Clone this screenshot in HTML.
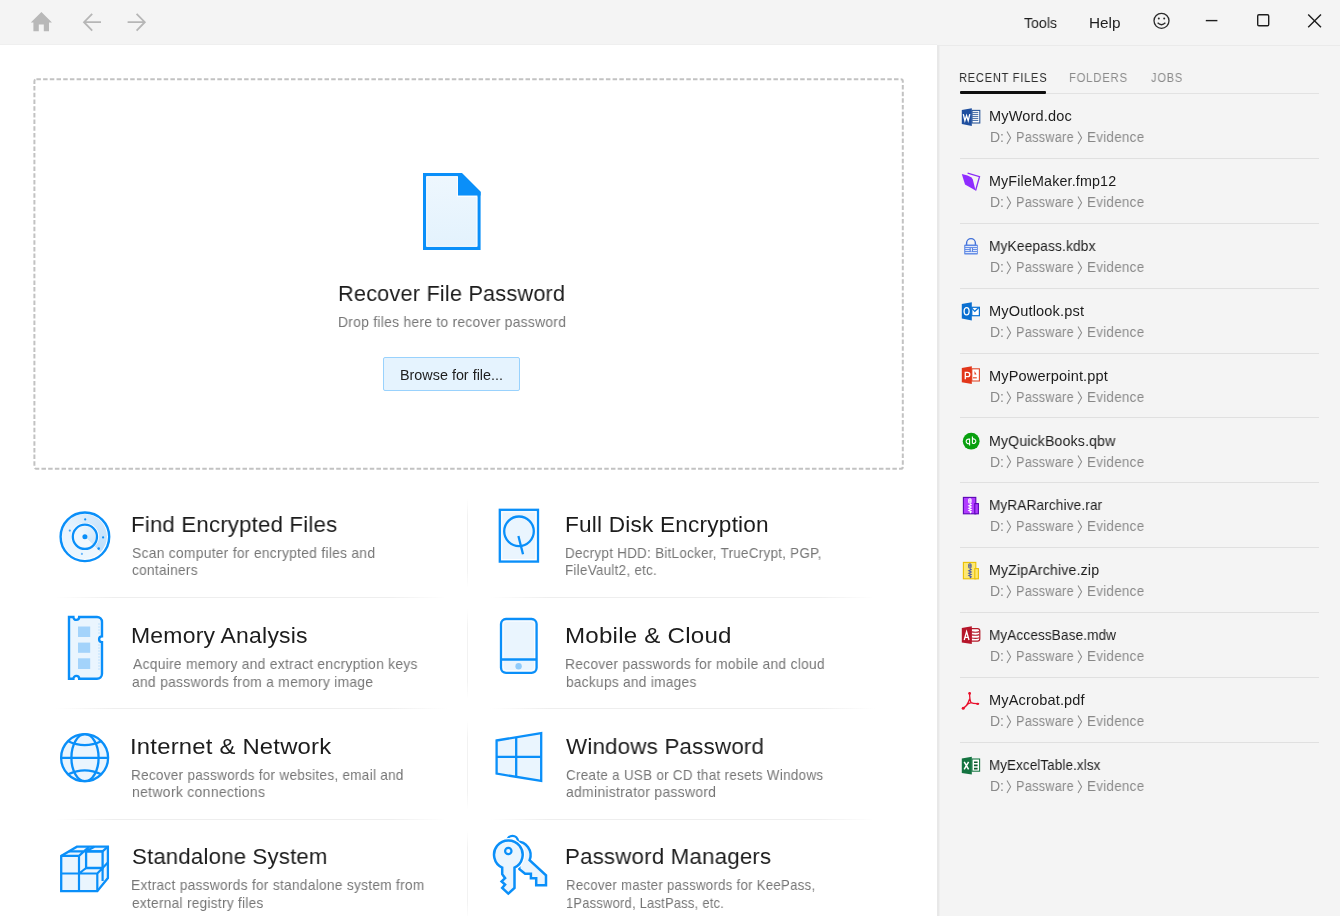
<!DOCTYPE html>
<html><head><meta charset="utf-8"><title>Passware Kit</title>
<style>
html,body{margin:0;padding:0;width:1340px;height:916px;overflow:hidden;background:#fff;position:relative}
.t{position:absolute;white-space:nowrap;line-height:1;font-family:"Liberation Sans",sans-serif;transform-origin:0 0;will-change:transform}
svg{display:block}
</style></head><body>
<div style="position:absolute;left:0;top:0;width:1340px;height:44px;background:#f4f4f4"></div>
<div style="position:absolute;left:0;top:43.5px;width:937px;height:1.5px;background:#efefef"></div>
<div style="position:absolute;left:937px;top:44px;width:403px;height:872px;background:#f4f4f4"></div>
<div style="position:absolute;left:937px;top:45px;width:403px;height:1.2px;background:#eaeaea"></div>
<div style="position:absolute;left:937px;top:45px;width:1.6px;height:871px;background:#e8e8e8"></div>
<div style="position:absolute;left:938.6px;top:46px;width:1.2px;height:870px;background:#efefef"></div>
<svg style="position:absolute;left:0;top:0" width="200" height="44">
<path d="M41.4 12 L52 22.6 L49 22.6 L49 31.3 L43.8 31.3 L43.8 24.5 L38.8 24.5 L38.8 31.3 L33.4 31.3 L33.4 22.6 L30.8 22.6 Z" fill="#b8b8b8"/>
<g stroke="#b6b6b6" stroke-width="1.8" fill="none">
<path d="M101 22.2 H84.4 M92.2 13.8 L84 22.2 L92.2 30.6"/>
<path d="M127.6 22.2 H144.4 M136.6 13.8 L144.8 22.2 L136.6 30.6"/>
</g></svg>
<div class="t" style="left:1023.78px;top:15.30px;font-size:15px;color:#1e1e1e;transform:scaleX(0.9426);">Tools</div>
<div class="t" style="left:1089.34px;top:15.30px;font-size:15px;color:#1e1e1e;transform:scaleX(1.0211);">Help</div>
<svg style="position:absolute;left:1140px;top:0" width="200" height="44">
<g stroke="#2a2a2a" stroke-width="1.3" fill="none">
<circle cx="21.5" cy="20.8" r="7.5"/>
<path d="M17.6 22.8 Q21.5 26.6 25.4 22.8"/>
</g>
<circle cx="18.8" cy="18.4" r="1" fill="#2a2a2a"/><circle cx="24.2" cy="18.4" r="1" fill="#2a2a2a"/>
<g stroke="#1e1e1e" stroke-width="1.4" fill="none">
<path d="M65.8 20.6 H77.4"/>
<rect x="117.7" y="14.7" width="11" height="11" rx="1.2"/>
<path d="M168.2 14.4 L181 27.2 M181 14.4 L168.2 27.2"/>
</g></svg>
<svg style="position:absolute;left:0;top:45px" width="937" height="440">
<rect x="34.4" y="34.2" width="868.4" height="389.6" rx="2" fill="none" stroke="#c2c2c2" stroke-width="2" stroke-dasharray="4.5 2.2"/>
</svg>
<svg style="position:absolute;left:400px;top:160px" width="100" height="100">
<defs><linearGradient id="dg" x1="0" y1="0" x2="0" y2="1"><stop offset="0" stop-color="#eef7fe"/><stop offset="1" stop-color="#e3f2fd"/></linearGradient></defs>
<path d="M24.6 14.6 H61.2 L79 32.4 V88.4 H24.6 Z" fill="url(#dg)" stroke="#0a8ff9" stroke-width="3.2"/>
<path d="M58 13 H61.6 L80.6 32 V35.6 H58 Z" fill="#0a8ff9"/>
<path d="M26.7 16.7 H57.4 V36.6 H76.9 V86.3 H26.7 Z" fill="none" stroke="#fff" stroke-width="0.9"/>
</svg>
<div class="t" style="left:337.51px;top:282.65px;font-size:22.5px;color:#1c1c1c;transform:scaleX(0.9649);letter-spacing:0.2px;">Recover File Password</div>
<div class="t" style="left:337.86px;top:315.10px;font-size:14.3px;color:#767676;transform:scaleX(0.9664);letter-spacing:0.3px;">Drop files here to recover password</div>
<div style="position:absolute;left:383px;top:357px;width:135px;height:32px;border:1px solid #99d2fd;border-radius:2px;background:#e5f3fe"></div>
<div class="t" style="left:400.41px;top:368.08px;font-size:14.2px;color:#1e1e1e;transform:scaleX(1.0124);">Browse for file...</div>
<div class="t" style="left:130.77px;top:513.55px;font-size:22.5px;color:#1c1c1c;transform:scaleX(0.9867);letter-spacing:0.2px;">Find Encrypted Files</div>
<div class="t" style="left:131.98px;top:546.01px;font-size:14.4px;color:#767676;transform:scaleX(0.9599);letter-spacing:0.3px;">Scan computer for encrypted files and</div>
<div class="t" style="left:132.02px;top:563.41px;font-size:14.4px;color:#767676;transform:scaleX(0.9480);letter-spacing:0.3px;">containers</div>
<div class="t" style="left:564.73px;top:513.55px;font-size:22.5px;color:#1c1c1c;transform:scaleX(1.0054);letter-spacing:0.2px;">Full Disk Encryption</div>
<div class="t" style="left:565.49px;top:546.01px;font-size:14.4px;color:#767676;transform:scaleX(0.9321);letter-spacing:0.3px;">Decrypt HDD: BitLocker, TrueCrypt, PGP,</div>
<div class="t" style="left:565.49px;top:563.41px;font-size:14.4px;color:#767676;transform:scaleX(0.9315);letter-spacing:0.3px;">FileVault2, etc.</div>
<div class="t" style="left:130.70px;top:624.75px;font-size:22.5px;color:#1c1c1c;transform:scaleX(1.0217);letter-spacing:0.2px;">Memory Analysis</div>
<div class="t" style="left:132.57px;top:657.21px;font-size:14.4px;color:#767676;transform:scaleX(0.9602);letter-spacing:0.3px;">Acquire memory and extract encryption keys</div>
<div class="t" style="left:132.01px;top:674.61px;font-size:14.4px;color:#767676;transform:scaleX(0.9629);letter-spacing:0.3px;">and passwords from a memory image</div>
<div class="t" style="left:564.61px;top:624.75px;font-size:22.5px;color:#1c1c1c;transform:scaleX(1.0732);letter-spacing:0.2px;">Mobile &amp; Cloud</div>
<div class="t" style="left:565.46px;top:657.21px;font-size:14.4px;color:#767676;transform:scaleX(0.9578);letter-spacing:0.3px;">Recover passwords for mobile and cloud</div>
<div class="t" style="left:565.71px;top:674.61px;font-size:14.4px;color:#767676;transform:scaleX(0.9503);letter-spacing:0.3px;">backups and images</div>
<div class="t" style="left:130.39px;top:735.55px;font-size:22.5px;color:#1c1c1c;transform:scaleX(1.0603);letter-spacing:0.2px;">Internet &amp; Network</div>
<div class="t" style="left:131.48px;top:768.01px;font-size:14.4px;color:#767676;transform:scaleX(0.9408);letter-spacing:0.3px;">Recover passwords for websites, email and</div>
<div class="t" style="left:131.65px;top:785.41px;font-size:14.4px;color:#767676;transform:scaleX(0.9733);letter-spacing:0.3px;">network connections</div>
<div class="t" style="left:566.49px;top:735.55px;font-size:22.5px;color:#1c1c1c;transform:scaleX(0.9930);letter-spacing:0.2px;">Windows Password</div>
<div class="t" style="left:565.93px;top:768.01px;font-size:14.4px;color:#767676;transform:scaleX(0.9348);letter-spacing:0.3px;">Create a USB or CD that resets Windows</div>
<div class="t" style="left:566.01px;top:785.41px;font-size:14.4px;color:#767676;transform:scaleX(0.9671);letter-spacing:0.3px;">administrator password</div>
<div class="t" style="left:131.60px;top:845.95px;font-size:22.5px;color:#1c1c1c;transform:scaleX(0.9854);letter-spacing:0.2px;">Standalone System</div>
<div class="t" style="left:131.47px;top:878.41px;font-size:14.4px;color:#767676;transform:scaleX(0.9520);letter-spacing:0.3px;">Extract passwords for standalone system from</div>
<div class="t" style="left:132.02px;top:895.81px;font-size:14.4px;color:#767676;transform:scaleX(0.9481);letter-spacing:0.3px;">external registry files</div>
<div class="t" style="left:564.76px;top:845.95px;font-size:22.5px;color:#1c1c1c;transform:scaleX(0.9896);letter-spacing:0.2px;">Password Managers</div>
<div class="t" style="left:565.51px;top:878.41px;font-size:14.4px;color:#767676;transform:scaleX(0.9175);letter-spacing:0.3px;">Recover master passwords for KeePass,</div>
<div class="t" style="left:565.64px;top:895.81px;font-size:14.4px;color:#767676;transform:scaleX(0.8929);letter-spacing:0.3px;">1Password, LastPass, etc.</div>
<div style="position:absolute;left:55px;top:597.0px;width:392px;height:1px;background:linear-gradient(90deg,rgba(236,236,236,0),#eeeeee 15%,#eeeeee 85%,rgba(236,236,236,0))"></div>
<div style="position:absolute;left:490px;top:597.0px;width:385px;height:1px;background:linear-gradient(90deg,rgba(236,236,236,0),#eeeeee 15%,#eeeeee 85%,rgba(236,236,236,0))"></div>
<div style="position:absolute;left:55px;top:707.8px;width:392px;height:1px;background:linear-gradient(90deg,rgba(236,236,236,0),#eeeeee 15%,#eeeeee 85%,rgba(236,236,236,0))"></div>
<div style="position:absolute;left:490px;top:707.8px;width:385px;height:1px;background:linear-gradient(90deg,rgba(236,236,236,0),#eeeeee 15%,#eeeeee 85%,rgba(236,236,236,0))"></div>
<div style="position:absolute;left:55px;top:818.5px;width:392px;height:1px;background:linear-gradient(90deg,rgba(236,236,236,0),#eeeeee 15%,#eeeeee 85%,rgba(236,236,236,0))"></div>
<div style="position:absolute;left:490px;top:818.5px;width:385px;height:1px;background:linear-gradient(90deg,rgba(236,236,236,0),#eeeeee 15%,#eeeeee 85%,rgba(236,236,236,0))"></div>
<div style="position:absolute;left:467px;top:498.0px;width:1px;height:90px;background:linear-gradient(180deg,rgba(240,240,240,0),#f2f2f2 20%,#f2f2f2 80%,rgba(240,240,240,0))"></div>
<div style="position:absolute;left:467px;top:608.8px;width:1px;height:90px;background:linear-gradient(180deg,rgba(240,240,240,0),#f2f2f2 20%,#f2f2f2 80%,rgba(240,240,240,0))"></div>
<div style="position:absolute;left:467px;top:719.5px;width:1px;height:90px;background:linear-gradient(180deg,rgba(240,240,240,0),#f2f2f2 20%,#f2f2f2 80%,rgba(240,240,240,0))"></div>
<div style="position:absolute;left:467px;top:830.2px;width:1px;height:90px;background:linear-gradient(180deg,rgba(240,240,240,0),#f2f2f2 20%,#f2f2f2 80%,rgba(240,240,240,0))"></div>
<div style="position:absolute;left:62.30px;top:514.20px;width:45.20px;height:45.20px;border-radius:50%;background:conic-gradient(from 135deg, #eef7fe 0deg, #e8f4fe 160deg, #d3e9fc 250deg, #bfdffb 359.5deg, #eef7fe 360deg);"></div>
<div style="position:absolute;left:71.20px;top:523.10px;width:27.40px;height:27.40px;border-radius:50%;background:#fff;"></div>
<div style="position:absolute;left:73.90px;top:525.80px;width:22.00px;height:22.00px;border-radius:50%;background:conic-gradient(from 135deg, #f1f8fe 0deg, #eef7fe 180deg, #e0f0fd 270deg, #cfe7fb 359.5deg, #f1f8fe 360deg);"></div>
<svg style="position:absolute;left:0;top:0" width="937" height="916">
<g stroke="#0a8ff9" stroke-width="2.2" fill="#eaf5fe" stroke-linejoin="miter">
<!-- radar strokes -->
<circle cx="84.9" cy="536.8" r="24.3" stroke-width="2.4" fill="none"/>
<circle cx="84.9" cy="536.8" r="12.1" stroke-width="2.3" fill="none"/>
<circle cx="84.9" cy="536.8" r="2.5" fill="#0a8ff9" stroke="none"/>
<circle cx="85.2" cy="519.4" r="1.1" fill="#0a8ff9" stroke="none"/>
<circle cx="69.8" cy="530.6" r="1.1" fill="#3ea3fa" stroke="none"/>
<circle cx="103.1" cy="537.4" r="1.1" fill="#0a8ff9" stroke="none"/>
<circle cx="98.7" cy="548.6" r="1.3" fill="#0a8ff9" stroke="none"/>
<circle cx="81.9" cy="553.9" r="1.1" fill="#6db8fb" stroke="none"/>
<!-- hdd -->
<rect x="499.8" y="509.8" width="38.2" height="51.8" stroke-width="2.3"/>
<rect x="501.9" y="511.9" width="34" height="47.6" stroke="#fff" stroke-width="1" fill="none"/>
<circle cx="519" cy="531.3" r="14.8" stroke-width="2.3"/>
<path d="M518.4 536 L523 554.2" stroke-width="2.3" fill="none"/>
<!-- memory -->
<path d="M69 617 H73.4 A2.9 2.9 0 0 0 79.2 617 H97 A5 5 0 0 1 102 622 V636.4 A2.9 2.9 0 0 0 102 642.2 V673.8 A5 5 0 0 1 97 678.8 H79.2 A2.9 2.9 0 0 0 73.4 678.8 H69 Z" stroke-width="2.4"/>
<rect x="78" y="626.5" width="12.2" height="10.5" fill="#a3d3fb" stroke="none"/>
<rect x="78" y="642.6" width="12.2" height="10.2" fill="#a3d3fb" stroke="none"/>
<rect x="78" y="658.3" width="12.2" height="10.7" fill="#a3d3fb" stroke="none"/>
<path d="M98 624 H100 M98 627 H100 M98 630 H100 M98 633 H100 M98 645 H100 M98 648 H100 M98 651 H100 M98 654 H100 M98 657 H100 M98 660 H100 M98 663 H100 M98 666 H100 M98 669 H100" stroke="#b5dcfc" stroke-width="0.8"/>
<!-- phone -->
<rect x="501" y="619" width="35.6" height="53.8" rx="5" stroke-width="2.3"/>
<rect x="503.1" y="621.1" width="31.4" height="49.6" rx="3.2" stroke="#fff" stroke-width="0.9" fill="none"/>
<path d="M501 659.5 H536.6" stroke-width="2.3"/>
<circle cx="518.6" cy="666.3" r="3.2" fill="#8fcbfb" stroke="none"/>
<!-- globe -->
<circle cx="84.6" cy="757.7" r="23.5" stroke-width="2.3"/>
<ellipse cx="85" cy="757.7" rx="13.6" ry="23.5" stroke-width="2.3" fill="none"/>
<path d="M61.1 757.8 H108.1" stroke-width="2.3"/>
<path d="M68.2 741.2 Q84.8 749 101.2 741.2" fill="none" stroke-width="2.3"/>
<path d="M68.2 774.3 Q84.8 766.5 101.2 774.3" fill="none" stroke-width="2.3"/>
<!-- windows -->
<path d="M496.6 740.5 L541.2 733 V781 L496.6 773.6 Z" stroke-width="2.3"/>
<path d="M516.2 737.2 V777.2 M496.6 756.9 H541.2" stroke-width="2.3" fill="none"/>
<!-- cubes -->
<path d="M61.2 891.2 V855.9 L76.9 846.7 H107.9 V878 L97.3 891.2 Z" stroke-width="2.3"/>
<path d="M86.1 851.3 V868 H102.6 V851.3 Z" stroke-width="2.3" fill="#eef7fe"/>
<path d="M61.2 855.9 H79 V891.2 M61.2 873.5 H97.3 V891.2 M79 855.9 L89 846.7 M69 851.3 H102.6 M102.6 851.3 L107.9 846.7 M102.6 868 L107.9 862.5 M97.3 873.5 L102.6 868 M79 873.5 L86.1 868 M102.6 868 V881 M94.4 846.7 L86.1 851.3" fill="none" stroke-width="2.2"/>
<!-- keys -->
<path d="M507.2 841.2 A5.3 5.3 0 0 1 517.8 841.2" fill="none" stroke-width="2.4"/>
<path d="M516.4 841.6 A13.6 13.6 0 0 1 529.6 860.2 L546 875.4 V885.2 H536.2 V878.2 H530.9 V873.7 H525.1 L519.4 869.2 Z" stroke-width="2.5"/>
<path d="M502.2 867.6 A14.3 14.3 0 1 1 514.5 867.6 V888 L508.3 893.6 L502.2 888 L505.1 884.6 L501.6 881.4 L505.1 878.2 L502.2 874.2 Z" stroke="#fff" stroke-width="5" fill="none"/>
<path d="M502.2 867.6 A14.3 14.3 0 1 1 514.5 867.6 V888 L508.3 893.6 L502.2 888 L505.1 884.6 L501.6 881.4 L505.1 878.2 L502.2 874.2 Z" stroke-width="2.5"/>
<circle cx="508.3" cy="851" r="3.2" stroke-width="2.2" fill="none"/>
</g>
</svg>
<div class="t" style="left:959.29px;top:71.00px;font-size:13px;color:#2e2e2e;transform:scaleX(0.8518);letter-spacing:0.9px;">RECENT FILES</div>
<div class="t" style="left:1069.47px;top:71.00px;font-size:13px;color:#8a8a8a;transform:scaleX(0.8685);letter-spacing:0.9px;">FOLDERS</div>
<div class="t" style="left:1151.33px;top:71.00px;font-size:13px;color:#8a8a8a;transform:scaleX(0.8500);letter-spacing:0.9px;">JOBS</div>
<div style="position:absolute;left:1046px;top:92.6px;width:273px;height:1.6px;background:#e2e2e2"></div>
<div style="position:absolute;left:960.2px;top:91.1px;width:86.2px;height:2.8px;background:#0e0e0e;border-radius:1px"></div>
<div class="t" style="left:989.30px;top:109.30px;font-size:14.3px;color:#1c1c1c;transform:scaleX(1.0165);letter-spacing:0.15px;">MyWord.doc</div>
<div class="t" style="left:989.56px;top:130.25px;font-size:14px;color:#8a8a8a;transform:scaleX(0.9840);">D:</div>
<svg width="6" height="14" style="position:absolute;left:1006.40px;top:131.20px"><path d="M1 0.6 L4.6 6.8 L1 13" stroke="#8c8c8c" stroke-width="1.05" fill="none"/></svg>
<div class="t" style="left:1015.85px;top:130.25px;font-size:14px;color:#888888;transform:scaleX(0.9076);letter-spacing:0.3px;">Passware</div>
<svg width="6" height="14" style="position:absolute;left:1077.20px;top:131.20px"><path d="M1 0.6 L4.6 6.8 L1 13" stroke="#8c8c8c" stroke-width="1.05" fill="none"/></svg>
<div class="t" style="left:1086.50px;top:130.25px;font-size:14px;color:#888888;transform:scaleX(0.9564);letter-spacing:0.3px;">Evidence</div>
<div style="position:absolute;left:960px;top:158.00px;width:359px;height:1px;background:#e0e0e0"></div>
<div class="t" style="left:989.32px;top:174.15px;font-size:14.3px;color:#1c1c1c;letter-spacing:0.15px;">MyFileMaker.fmp12</div>
<div class="t" style="left:989.56px;top:195.10px;font-size:14px;color:#8a8a8a;transform:scaleX(0.9840);">D:</div>
<svg width="6" height="14" style="position:absolute;left:1006.40px;top:196.05px"><path d="M1 0.6 L4.6 6.8 L1 13" stroke="#8c8c8c" stroke-width="1.05" fill="none"/></svg>
<div class="t" style="left:1015.85px;top:195.10px;font-size:14px;color:#888888;transform:scaleX(0.9076);letter-spacing:0.3px;">Passware</div>
<svg width="6" height="14" style="position:absolute;left:1077.20px;top:196.05px"><path d="M1 0.6 L4.6 6.8 L1 13" stroke="#8c8c8c" stroke-width="1.05" fill="none"/></svg>
<div class="t" style="left:1086.50px;top:195.10px;font-size:14px;color:#888888;transform:scaleX(0.9564);letter-spacing:0.3px;">Evidence</div>
<div style="position:absolute;left:960px;top:222.85px;width:359px;height:1px;background:#e0e0e0"></div>
<div class="t" style="left:989.37px;top:239.00px;font-size:14.3px;color:#1c1c1c;transform:scaleX(0.9599);letter-spacing:0.15px;">MyKeepass.kdbx</div>
<div class="t" style="left:989.56px;top:259.95px;font-size:14px;color:#8a8a8a;transform:scaleX(0.9840);">D:</div>
<svg width="6" height="14" style="position:absolute;left:1006.40px;top:260.90px"><path d="M1 0.6 L4.6 6.8 L1 13" stroke="#8c8c8c" stroke-width="1.05" fill="none"/></svg>
<div class="t" style="left:1015.85px;top:259.95px;font-size:14px;color:#888888;transform:scaleX(0.9076);letter-spacing:0.3px;">Passware</div>
<svg width="6" height="14" style="position:absolute;left:1077.20px;top:260.90px"><path d="M1 0.6 L4.6 6.8 L1 13" stroke="#8c8c8c" stroke-width="1.05" fill="none"/></svg>
<div class="t" style="left:1086.50px;top:259.95px;font-size:14px;color:#888888;transform:scaleX(0.9564);letter-spacing:0.3px;">Evidence</div>
<div style="position:absolute;left:960px;top:287.70px;width:359px;height:1px;background:#e0e0e0"></div>
<div class="t" style="left:989.30px;top:303.85px;font-size:14.3px;color:#1c1c1c;transform:scaleX(1.0197);letter-spacing:0.15px;">MyOutlook.pst</div>
<div class="t" style="left:989.56px;top:324.80px;font-size:14px;color:#8a8a8a;transform:scaleX(0.9840);">D:</div>
<svg width="6" height="14" style="position:absolute;left:1006.40px;top:325.75px"><path d="M1 0.6 L4.6 6.8 L1 13" stroke="#8c8c8c" stroke-width="1.05" fill="none"/></svg>
<div class="t" style="left:1015.85px;top:324.80px;font-size:14px;color:#888888;transform:scaleX(0.9076);letter-spacing:0.3px;">Passware</div>
<svg width="6" height="14" style="position:absolute;left:1077.20px;top:325.75px"><path d="M1 0.6 L4.6 6.8 L1 13" stroke="#8c8c8c" stroke-width="1.05" fill="none"/></svg>
<div class="t" style="left:1086.50px;top:324.80px;font-size:14px;color:#888888;transform:scaleX(0.9564);letter-spacing:0.3px;">Evidence</div>
<div style="position:absolute;left:960px;top:352.55px;width:359px;height:1px;background:#e0e0e0"></div>
<div class="t" style="left:989.30px;top:368.70px;font-size:14.3px;color:#1c1c1c;transform:scaleX(1.0188);letter-spacing:0.15px;">MyPowerpoint.ppt</div>
<div class="t" style="left:989.56px;top:389.65px;font-size:14px;color:#8a8a8a;transform:scaleX(0.9840);">D:</div>
<svg width="6" height="14" style="position:absolute;left:1006.40px;top:390.60px"><path d="M1 0.6 L4.6 6.8 L1 13" stroke="#8c8c8c" stroke-width="1.05" fill="none"/></svg>
<div class="t" style="left:1015.85px;top:389.65px;font-size:14px;color:#888888;transform:scaleX(0.9076);letter-spacing:0.3px;">Passware</div>
<svg width="6" height="14" style="position:absolute;left:1077.20px;top:390.60px"><path d="M1 0.6 L4.6 6.8 L1 13" stroke="#8c8c8c" stroke-width="1.05" fill="none"/></svg>
<div class="t" style="left:1086.50px;top:389.65px;font-size:14px;color:#888888;transform:scaleX(0.9564);letter-spacing:0.3px;">Evidence</div>
<div style="position:absolute;left:960px;top:417.40px;width:359px;height:1px;background:#e0e0e0"></div>
<div class="t" style="left:989.33px;top:433.55px;font-size:14.3px;color:#1c1c1c;transform:scaleX(0.9882);letter-spacing:0.15px;">MyQuickBooks.qbw</div>
<div class="t" style="left:989.56px;top:454.50px;font-size:14px;color:#8a8a8a;transform:scaleX(0.9840);">D:</div>
<svg width="6" height="14" style="position:absolute;left:1006.40px;top:455.45px"><path d="M1 0.6 L4.6 6.8 L1 13" stroke="#8c8c8c" stroke-width="1.05" fill="none"/></svg>
<div class="t" style="left:1015.85px;top:454.50px;font-size:14px;color:#888888;transform:scaleX(0.9076);letter-spacing:0.3px;">Passware</div>
<svg width="6" height="14" style="position:absolute;left:1077.20px;top:455.45px"><path d="M1 0.6 L4.6 6.8 L1 13" stroke="#8c8c8c" stroke-width="1.05" fill="none"/></svg>
<div class="t" style="left:1086.50px;top:454.50px;font-size:14px;color:#888888;transform:scaleX(0.9564);letter-spacing:0.3px;">Evidence</div>
<div style="position:absolute;left:960px;top:482.25px;width:359px;height:1px;background:#e0e0e0"></div>
<div class="t" style="left:989.38px;top:498.40px;font-size:14.3px;color:#1c1c1c;transform:scaleX(0.9503);letter-spacing:0.15px;">MyRARarchive.rar</div>
<div class="t" style="left:989.56px;top:519.35px;font-size:14px;color:#8a8a8a;transform:scaleX(0.9840);">D:</div>
<svg width="6" height="14" style="position:absolute;left:1006.40px;top:520.30px"><path d="M1 0.6 L4.6 6.8 L1 13" stroke="#8c8c8c" stroke-width="1.05" fill="none"/></svg>
<div class="t" style="left:1015.85px;top:519.35px;font-size:14px;color:#888888;transform:scaleX(0.9076);letter-spacing:0.3px;">Passware</div>
<svg width="6" height="14" style="position:absolute;left:1077.20px;top:520.30px"><path d="M1 0.6 L4.6 6.8 L1 13" stroke="#8c8c8c" stroke-width="1.05" fill="none"/></svg>
<div class="t" style="left:1086.50px;top:519.35px;font-size:14px;color:#888888;transform:scaleX(0.9564);letter-spacing:0.3px;">Evidence</div>
<div style="position:absolute;left:960px;top:547.10px;width:359px;height:1px;background:#e0e0e0"></div>
<div class="t" style="left:989.33px;top:563.25px;font-size:14.3px;color:#1c1c1c;transform:scaleX(0.9903);letter-spacing:0.15px;">MyZipArchive.zip</div>
<div class="t" style="left:989.56px;top:584.20px;font-size:14px;color:#8a8a8a;transform:scaleX(0.9840);">D:</div>
<svg width="6" height="14" style="position:absolute;left:1006.40px;top:585.15px"><path d="M1 0.6 L4.6 6.8 L1 13" stroke="#8c8c8c" stroke-width="1.05" fill="none"/></svg>
<div class="t" style="left:1015.85px;top:584.20px;font-size:14px;color:#888888;transform:scaleX(0.9076);letter-spacing:0.3px;">Passware</div>
<svg width="6" height="14" style="position:absolute;left:1077.20px;top:585.15px"><path d="M1 0.6 L4.6 6.8 L1 13" stroke="#8c8c8c" stroke-width="1.05" fill="none"/></svg>
<div class="t" style="left:1086.50px;top:584.20px;font-size:14px;color:#888888;transform:scaleX(0.9564);letter-spacing:0.3px;">Evidence</div>
<div style="position:absolute;left:960px;top:611.95px;width:359px;height:1px;background:#e0e0e0"></div>
<div class="t" style="left:989.38px;top:628.10px;font-size:14.3px;color:#1c1c1c;transform:scaleX(0.9464);letter-spacing:0.15px;">MyAccessBase.mdw</div>
<div class="t" style="left:989.56px;top:649.05px;font-size:14px;color:#8a8a8a;transform:scaleX(0.9840);">D:</div>
<svg width="6" height="14" style="position:absolute;left:1006.40px;top:650.00px"><path d="M1 0.6 L4.6 6.8 L1 13" stroke="#8c8c8c" stroke-width="1.05" fill="none"/></svg>
<div class="t" style="left:1015.85px;top:649.05px;font-size:14px;color:#888888;transform:scaleX(0.9076);letter-spacing:0.3px;">Passware</div>
<svg width="6" height="14" style="position:absolute;left:1077.20px;top:650.00px"><path d="M1 0.6 L4.6 6.8 L1 13" stroke="#8c8c8c" stroke-width="1.05" fill="none"/></svg>
<div class="t" style="left:1086.50px;top:649.05px;font-size:14px;color:#888888;transform:scaleX(0.9564);letter-spacing:0.3px;">Evidence</div>
<div style="position:absolute;left:960px;top:676.80px;width:359px;height:1px;background:#e0e0e0"></div>
<div class="t" style="left:989.30px;top:692.95px;font-size:14.3px;color:#1c1c1c;transform:scaleX(1.0177);letter-spacing:0.15px;">MyAcrobat.pdf</div>
<div class="t" style="left:989.56px;top:713.90px;font-size:14px;color:#8a8a8a;transform:scaleX(0.9840);">D:</div>
<svg width="6" height="14" style="position:absolute;left:1006.40px;top:714.85px"><path d="M1 0.6 L4.6 6.8 L1 13" stroke="#8c8c8c" stroke-width="1.05" fill="none"/></svg>
<div class="t" style="left:1015.85px;top:713.90px;font-size:14px;color:#888888;transform:scaleX(0.9076);letter-spacing:0.3px;">Passware</div>
<svg width="6" height="14" style="position:absolute;left:1077.20px;top:714.85px"><path d="M1 0.6 L4.6 6.8 L1 13" stroke="#8c8c8c" stroke-width="1.05" fill="none"/></svg>
<div class="t" style="left:1086.50px;top:713.90px;font-size:14px;color:#888888;transform:scaleX(0.9564);letter-spacing:0.3px;">Evidence</div>
<div style="position:absolute;left:960px;top:741.65px;width:359px;height:1px;background:#e0e0e0"></div>
<div class="t" style="left:989.40px;top:757.80px;font-size:14.3px;color:#1c1c1c;transform:scaleX(0.9341);letter-spacing:0.15px;">MyExcelTable.xlsx</div>
<div class="t" style="left:989.56px;top:778.75px;font-size:14px;color:#8a8a8a;transform:scaleX(0.9840);">D:</div>
<svg width="6" height="14" style="position:absolute;left:1006.40px;top:779.70px"><path d="M1 0.6 L4.6 6.8 L1 13" stroke="#8c8c8c" stroke-width="1.05" fill="none"/></svg>
<div class="t" style="left:1015.85px;top:778.75px;font-size:14px;color:#888888;transform:scaleX(0.9076);letter-spacing:0.3px;">Passware</div>
<svg width="6" height="14" style="position:absolute;left:1077.20px;top:779.70px"><path d="M1 0.6 L4.6 6.8 L1 13" stroke="#8c8c8c" stroke-width="1.05" fill="none"/></svg>
<div class="t" style="left:1086.50px;top:778.75px;font-size:14px;color:#888888;transform:scaleX(0.9564);letter-spacing:0.3px;">Evidence</div>
<svg style="position:absolute;left:956px;top:104.00px" width="30" height="26"><rect x="16" y="6.4" width="7.8" height="12.6" fill="#fff" stroke="#2a5699" stroke-width="1.1"/><path d="M16.2 8.4 H22.3 M16.2 10.4 H22.3 M16.2 12.4 H22.3 M16.2 14.4 H22.3 M16.2 16.4 H22.3" stroke="#2a5699" stroke-width="0.9"/><path d="M5.8 6 L15.8 4.3 V21.9 L5.8 20 Z" fill="#1f4f9f"/><path d="M7.3 10.2 L8.9 16.6 L10.55 11.6 L12.2 16.6 L13.8 10.2" fill="none" stroke="#fff" stroke-width="1.35" stroke-linejoin="miter"/></svg>
<svg style="position:absolute;left:956px;top:168.85px" width="30" height="26"><path d="M11.6 4.2 L23.5 7.6 L19.6 21.5" fill="none" stroke="#8a2cf6" stroke-width="1.3"/><path d="M5.8 5 L11.6 6.6 L15.6 8.6 L16.8 10.5 L19.6 21.5 L9 15.6 Z" fill="#8f2cff"/></svg>
<svg style="position:absolute;left:956px;top:233.70px" width="30" height="26"><path d="M10.6 11 V9 A4.4 4.4 0 0 1 19.4 9 V11" fill="none" stroke="#3f6fd8" stroke-width="1.4"/><rect x="8.2" y="10.4" width="13.6" height="10.2" rx="1.2" fill="#5b86e4"/><path d="M9.3 12.6 H21 M9.3 14.6 H13.6 M17 14.6 H21 M9.3 16.6 H13.6 M17 16.6 H21 M9.3 18.6 H21" stroke="#fff" stroke-width="0.9"/><rect x="14.8" y="14" width="1" height="3.5" fill="#fff"/></svg>
<svg style="position:absolute;left:956px;top:298.55px" width="30" height="26"><rect x="15.8" y="8.3" width="7.6" height="8.4" fill="#fff" stroke="#0a72d4" stroke-width="1.2"/><path d="M16 9.4 L18.8 12.3 L22.6 8.8" fill="none" stroke="#0a72d4" stroke-width="1.2"/><path d="M5.8 5 L15.8 3.3 V21.4 L5.8 19.6 Z" fill="#0a6fd0"/><ellipse cx="10.6" cy="12.2" rx="2.5" ry="3.6" fill="none" stroke="#fff" stroke-width="1.3"/></svg>
<svg style="position:absolute;left:956px;top:363.40px" width="30" height="26"><rect x="15.8" y="5.8" width="7.6" height="12.2" fill="#fff" stroke="#e04a2c" stroke-width="1.1"/><path d="M17 14.8 H20.8" stroke="#ea5a3a" stroke-width="1.3"/><path d="M18.5 8 V11.6 H20.6 Z" fill="#e83b1e"/><path d="M5.8 5 L15.8 3.2 V21 L5.8 19.3 Z" fill="#e2361a"/><path d="M9.3 16.2 V9.3 H11.6 A2.2 2.2 0 0 1 11.6 13.7 H9.3" fill="none" stroke="#fff" stroke-width="1.3"/></svg>
<svg style="position:absolute;left:956px;top:428.25px" width="30" height="26"><circle cx="15.2" cy="13.2" r="8.4" fill="#08a00e"/><path d="M13.6 17.4 V10.6 M13.4 11.2 A2.5 2.3 0 1 0 13.4 15.6 M16.4 8.4 V15.6 M16.6 11 A2.5 2.3 0 1 1 16.6 15.4" fill="none" stroke="#fff" stroke-width="1.1"/></svg>
<svg style="position:absolute;left:956px;top:493.10px" width="30" height="26"><rect x="7.4" y="4.4" width="12.4" height="16.4" fill="#b13bff" stroke="#5a06b5" stroke-width="1.1"/><rect x="18.8" y="10.6" width="3.6" height="10.2" fill="#b13bff" stroke="#5a06b5" stroke-width="1.1"/><rect x="12.2" y="5.2" width="3.4" height="5.4" rx="1.6" fill="#fff"/><circle cx="13.9" cy="6.8" r="0.6" fill="#b13bff"/><circle cx="13.9" cy="8.9" r="0.6" fill="#b13bff"/><path d="M13.9 10.6 L15.2 11.6 L12.8 12.8 L15.2 14 L12.8 15.2 L15.2 16.4 L12.8 17.6 L15.2 18.8 L13.9 20" fill="none" stroke="#fff" stroke-width="1.1"/></svg>
<svg style="position:absolute;left:956px;top:557.95px" width="30" height="26"><rect x="7.4" y="4.4" width="12.4" height="16.4" fill="#fde873" stroke="#eabf00" stroke-width="1.1"/><rect x="18.8" y="10.6" width="3.6" height="10.2" fill="#fde873" stroke="#eabf00" stroke-width="1.1"/><rect x="12.2" y="5.2" width="3.4" height="5.4" rx="1.6" fill="#4a5aa8"/><circle cx="13.9" cy="6.8" r="0.6" fill="#fde873"/><circle cx="13.9" cy="8.9" r="0.6" fill="#fde873"/><path d="M13.9 10.6 L15.2 11.6 L12.8 12.8 L15.2 14 L12.8 15.2 L15.2 16.4 L12.8 17.6 L15.2 18.8 L13.9 20" fill="none" stroke="#4a5aa8" stroke-width="1.1"/></svg>
<svg style="position:absolute;left:956px;top:622.80px" width="30" height="26"><path d="M15 5.6 H21.6 Q23.8 5.6 23.8 8 V15.8 Q23.8 18.2 21.6 18.2 H15 Z" fill="#fff" stroke="#b41a2a" stroke-width="1.2"/><path d="M15.6 8.8 Q20 9.8 23.4 8.6 M15.6 11.8 Q20 12.8 23.4 11.6 M15.6 15 Q20 16 23.4 14.8" fill="none" stroke="#b41a2a" stroke-width="1.2"/><path d="M5.8 5 L15.8 3.3 V21 L5.8 19.4 Z" fill="#b6152a"/><path d="M8.2 17 L10.6 8.6 L13 17 M9.2 14.4 H12" fill="none" stroke="#fff" stroke-width="1.3"/></svg>
<svg style="position:absolute;left:956px;top:687.65px" width="30" height="26"><path d="M13.6 5 C13.6 10 13.8 12 15 14.6 C17.5 15.8 20 15.6 22.6 15.8 M15 14.6 C12 15.4 11.5 16 10.2 17.8 C8.8 19.2 7.8 19.8 7 20.4 M13.6 11 C12.6 14 11.2 16.5 10.2 17.8" fill="none" stroke="#e8102c" stroke-width="1.3" stroke-linecap="round"/><circle cx="13.6" cy="5.4" r="1.4" fill="#e8102c"/><circle cx="7.2" cy="20.2" r="1.5" fill="#e8102c"/><ellipse cx="21.6" cy="15.8" rx="1.6" ry="1.1" fill="#e8102c"/></svg>
<svg style="position:absolute;left:956px;top:752.50px" width="30" height="26"><rect x="16" y="6" width="7.6" height="12.2" fill="#fff" stroke="#1b7a45" stroke-width="1.1"/><path d="M18 9.2 H21.6 M18 12.4 H21.6 M18 15.6 H21.6" stroke="#0b5a2c" stroke-width="1.6"/><path d="M5.8 5.6 L15.8 3.8 V21.6 L5.8 19.9 Z" fill="#137340"/><path d="M8.2 8.8 L12.6 16.4 M12.6 8.8 L8.2 16.4" stroke="#fff" stroke-width="1.5"/></svg>
</body></html>
